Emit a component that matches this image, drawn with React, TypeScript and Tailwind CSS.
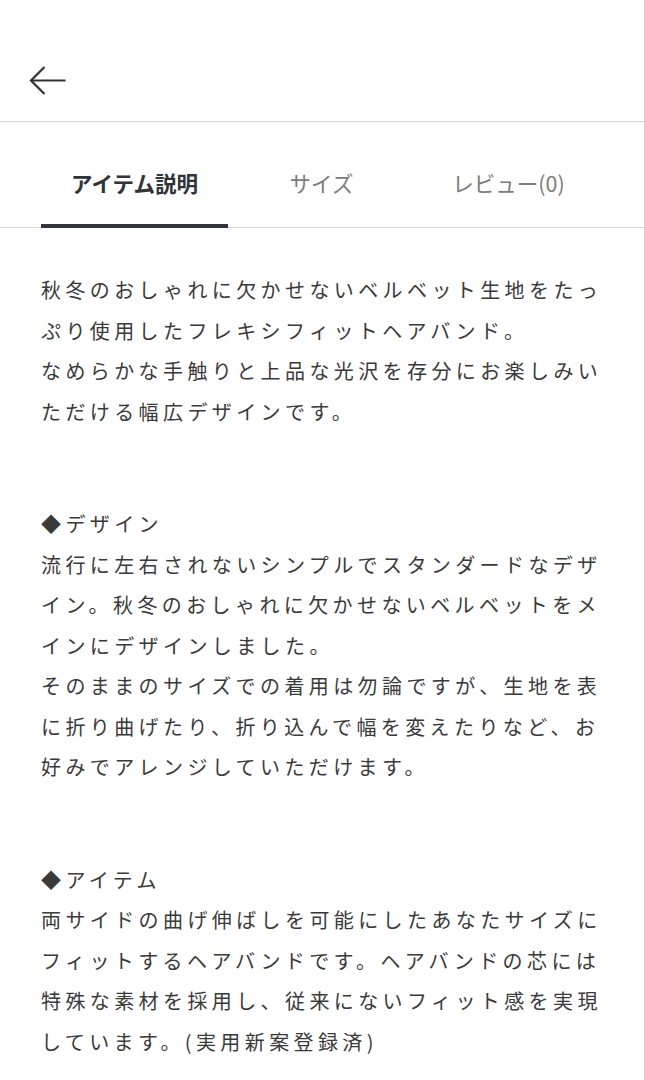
import { useState } from "react";

const tabs = ["アイテム説明", "サイズ", "レビュー(0)"];

const sections = [
  {
    heading: "",
    body: "秋冬のおしゃれに欠かせないベルベット生地をたっぷり使用したフレキシフィットヘアバンド。\nなめらかな手触りと上品な光沢を存分にお楽しみいただける幅広デザインです。",
  },
  {
    heading: "◆デザイン",
    body: "流行に左右されないシンプルでスタンダードなデザイン。秋冬のおしゃれに欠かせないベルベットをメインにデザインしました。\nそのままのサイズでの着用は勿論ですが、生地を表に折り曲げたり、折り込んで幅を変えたりなど、お好みでアレンジしていただけます。",
  },
  {
    heading: "◆アイテム",
    body: "両サイドの曲げ伸ばしを可能にしたあなたサイズにフィットするヘアバンドです。ヘアバンドの芯には特殊な素材を採用し、従来にないフィット感を実現しています。(実用新案登録済)",
  },
];

export default function App() {
  const [active, setActive] = useState(0);

  return (
    <div
      className="w-[645px] min-h-[1080px] bg-white border-r border-[#cfcfcf]"
      style={{ fontFamily: '"Noto Sans CJK JP", "Noto Sans", sans-serif' }}
    >
      <header className="h-[122px] border-b border-[#d2d2d2] flex items-start pt-[65px] pl-[29px]">
        <button className="w-[38px] h-[32px] flex items-center justify-center">
          <svg width="38" height="32" viewBox="0 0 38 32" fill="none">
            <path d="M2 15.5H36.5" stroke="#333" strokeWidth="2.2" />
            <path d="M15.5 2L2 15.5L15.5 29" stroke="#333" strokeWidth="2.2" />
          </svg>
        </button>
      </header>

      <nav className="flex h-[106px] px-[41px] border-b border-[#d6d6d6]">
        {tabs.map((t, i) => (
          <button
            key={t}
            onClick={() => setActive(i)}
            className="w-[187px] flex flex-col items-center pt-[47px]"
          >
            <span
              className={
                i === active
                  ? "text-[21.5px] leading-[28px] font-bold text-[#2f343a]"
                  : "text-[21.5px] leading-[28px] text-[#7d7d7d]"
              }
            >
              {t}
            </span>
            <span
              className={
                i === active
                  ? "mt-auto w-full h-[4px] bg-[#30363c] -mb-px"
                  : "mt-auto w-full h-[4px]"
              }
            />
          </button>
        ))}
      </nav>

      <div className="pt-[42px] pl-[41px] pr-[24px] text-[20px] leading-[40.5px] tracking-[4.4px] text-[#3a3a3a]">
        {sections.map((s, i) => (
          <div key={i} className={i === 0 ? "" : "mt-[72px]"}>
            {s.heading && <p>{s.heading}</p>}
            <p className="whitespace-pre-line">{s.body}</p>
          </div>
        ))}
      </div>
    </div>
  );
}
